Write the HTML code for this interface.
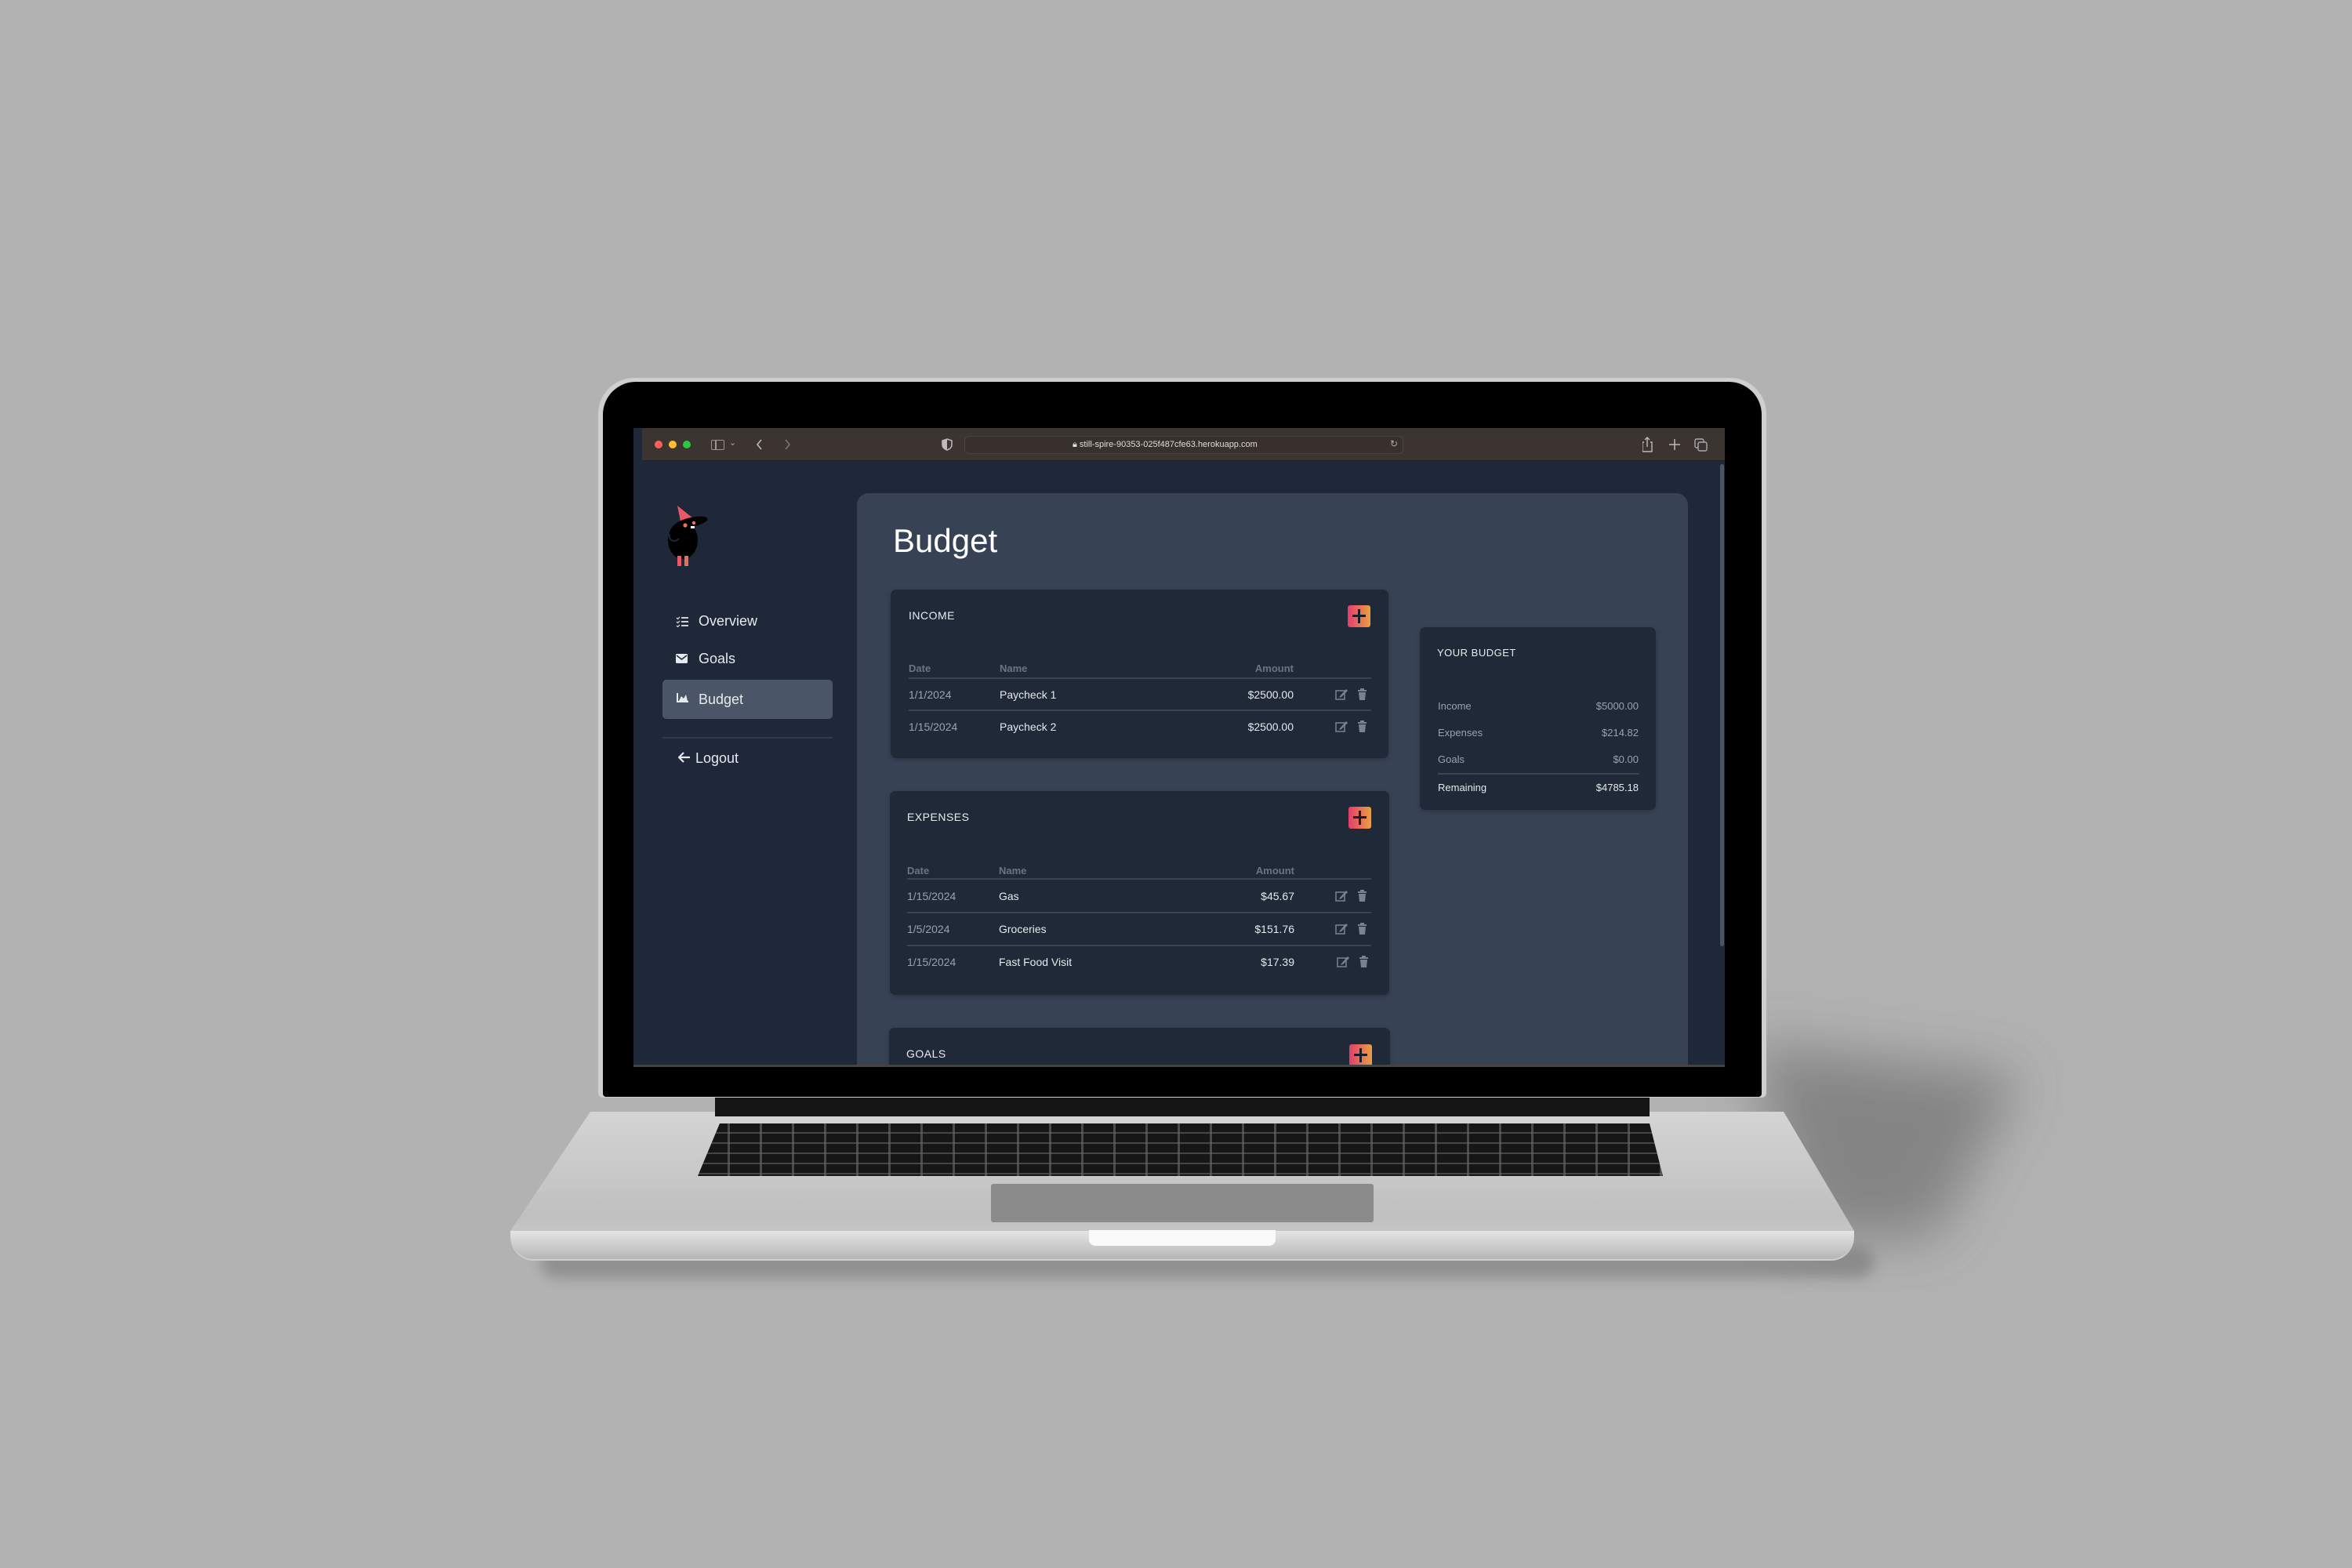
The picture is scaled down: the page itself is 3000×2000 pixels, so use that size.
<!DOCTYPE html>
<html><head><meta charset="utf-8"><style>
*{margin:0;padding:0;box-sizing:border-box}
body{width:3000px;height:2000px;background:#b2b2b2;position:relative;overflow:hidden;font-family:"Liberation Sans",sans-serif}
.a{position:absolute}
.t{position:absolute;white-space:nowrap}
.card{position:absolute;background:#1f2938;border-radius:7px;box-shadow:0 2px 6px rgba(0,0,0,.25)}
.lbl{color:#e8ecf0;font-size:14px;letter-spacing:.5px}
.hd{color:#6b7482;font-size:13px;font-weight:bold}
.cell{color:#e6e9ed;font-size:14px}
.dt{color:#9aa2ad;font-size:14px}
.line{position:absolute;height:2px;background:#3a4453}
.plus{position:absolute;width:29px;height:28px;border-radius:3px;background:linear-gradient(90deg,#e33d6c,#e9a043)}
.plus:before{content:"";position:absolute;left:13px;top:5px;width:3px;height:18px;background:#1b1f27}
.plus:after{content:"";position:absolute;left:6px;top:12px;width:17px;height:3px;background:#1b1f27}
</style></head><body>
<!-- shadow -->
<svg class="a" style="left:0;top:0" width="3000" height="2000">
 <defs><filter id="b" x="-50%" y="-50%" width="200%" height="200%"><feGaussianBlur stdDeviation="35"/></filter></defs>
 <polygon points="2230,1330 2580,1370 2470,1580 2300,1580" fill="rgba(95,95,95,.55)" filter="url(#b)"/>
</svg>
<div class="a" style="left:690px;top:1590px;width:1700px;height:40px;background:rgba(110,110,110,.5);filter:blur(8px);border-radius:20px"></div>
<!-- base -->
<div class="a" style="left:651px;top:1418px;width:1714px;height:190px;background:linear-gradient(#d4d4d4,#c0c0c0 70%,#cfcfcf);clip-path:polygon(102px 0,1624px 0,1714px 152px,1714px 190px,0 190px,0 152px);border-radius:0 0 30px 30px"></div>
<div class="a" style="left:651px;top:1570px;width:1714px;height:36px;background:linear-gradient(#e4e4e4,#c9c9c9 60%,#b5b5b5);border-radius:0 0 30px 30px"></div>
<div class="a" style="left:912px;top:1397px;width:1192px;height:27px;background:#141414"></div>
<div class="a" style="left:890px;top:1433px;width:1231px;height:67px;background:repeating-linear-gradient(90deg,#161616 0 38px,#4a4a4a 38px 41px);clip-path:polygon(28px 0,1214px 0,1231px 67px,0 67px)"></div>
<div class="a" style="left:890px;top:1433px;width:1231px;height:67px;background:repeating-linear-gradient(180deg,transparent 0 11px,rgba(100,100,100,.6) 11px 13px);clip-path:polygon(28px 0,1214px 0,1231px 67px,0 67px)"></div>
<div class="a" style="left:1264px;top:1510px;width:488px;height:49px;background:#8b8b8b;border-radius:3px"></div>
<div class="a" style="left:1389px;top:1569px;width:238px;height:20px;background:#fafafa;border-radius:0 0 8px 8px"></div>
<!-- lid -->
<div class="a" style="left:763px;top:482px;width:1490px;height:918px;background:#cfcfcf;border-radius:46px 46px 6px 6px"></div>
<div class="a" style="left:769px;top:487px;width:1478px;height:912px;background:#000;border-radius:42px 42px 4px 4px"></div>
<!-- screen -->
<div class="a" style="left:808px;top:546px;width:1392px;height:813px;background:#1e2839;overflow:hidden">
 <div class="a" style="left:11px;top:0;width:1381px;height:42px;background:#3b3430;border-bottom:1px solid #222"></div>
 <div class="a" style="left:27px;top:16px;width:10px;height:10px;border-radius:50%;background:#fe5f57"></div>
 <div class="a" style="left:45px;top:16px;width:10px;height:10px;border-radius:50%;background:#febc2e"></div>
 <div class="a" style="left:63px;top:16px;width:10px;height:10px;border-radius:50%;background:#28c840"></div>
 <div class="a" style="left:99px;top:15px;width:17px;height:13px;border:1.5px solid #9a948f;border-radius:2px"></div>
 <div class="a" style="left:104px;top:16px;width:1.5px;height:11px;background:#9a948f"></div>
 <div class="t" style="left:122px;top:12px;color:#aaa;font-size:11px">⌄</div>
 <svg class="a" style="left:155px;top:13px" width="60" height="16"><path d="M8 2L3 8 8 14" stroke="#bbb" stroke-width="1.6" fill="none"/><path d="M39 2L44 8 39 14" stroke="#777" stroke-width="1.6" fill="none"/></svg>
 <svg class="a" style="left:393px;top:13px" width="14" height="16"><path d="M7 1L13 3V8C13 12 10 14 7 15 4 14 1 12 1 8V3Z" fill="none" stroke="#bbb" stroke-width="1.5"/><path d="M7 1V15C4 14 1 12 1 8V3Z" fill="#bbb"/></svg>
 <div class="a" style="left:422px;top:10px;width:560px;height:23px;border:1px solid #4a4440;border-radius:6px;background:#37302c"></div>
 <div class="t" style="left:560px;top:15px;color:#ddd;font-size:11px">🔒︎ still-spire-90353-025f487cfe63.herokuapp.com</div>
 <div class="t" style="left:965px;top:13px;color:#aaa;font-size:12px">↻</div>
 <svg class="a" style="left:1287px;top:10px" width="90" height="22"><path d="M2 8H0V20H12V8H10M6 14V2M3 5L6 2 9 5" stroke="#bbb" stroke-width="1.4" fill="none"/><path d="M41 4V18M34 11H48" stroke="#bbb" stroke-width="1.5"/><rect x="67" y="4" width="11" height="11" rx="2" fill="none" stroke="#aaa" stroke-width="1.4"/><rect x="71" y="8" width="11" height="11" rx="2" fill="#3b3430" stroke="#aaa" stroke-width="1.4"/></svg>
 <div class="a" style="left:1386px;top:46px;width:5px;height:615px;background:#4a5463;border-radius:3px"></div>
 <!-- logo -->
 <svg class="a" style="left:30px;top:95px" width="75" height="90" viewBox="0 0 75 90">
  <polygon points="26,4 46,20 30,24" fill="#e85866"/>
  <ellipse cx="33" cy="48" rx="19" ry="24" fill="#000"/>
  <ellipse cx="44" cy="25" rx="21" ry="6" fill="#000" transform="rotate(-12 44 25)"/>
  <path d="M16 40C14 48 22 52 28 46" stroke="#1e2839" stroke-width="2" fill="none"/>
  <circle cx="36" cy="29" r="2.6" fill="#f07060"/><circle cx="47" cy="26" r="2.2" fill="#f07060"/>
  <rect x="43" y="30" width="5" height="3" fill="#fff"/>
  <rect x="26" y="68" width="5" height="13" fill="#e85866"/><rect x="35" y="68" width="5" height="13" fill="#e87050"/>
 </svg>
 <!-- nav -->
 <svg class="a" style="left:54px;top:240px" width="16" height="14"><path d="M1 2L2.5 3.5 5 1M1 7L2.5 8.5 5 6M1 12L2.5 13.5 5 11" stroke="#e6e9ed" stroke-width="1.2" fill="none"/><path d="M7 2H16M7 7H16M7 12H16" stroke="#e6e9ed" stroke-width="1.8"/></svg>
 <div class="t" style="left:83px;top:236px;color:#e6e9ed;font-size:18px">Overview</div>
 <svg class="a" style="left:54px;top:288px" width="15" height="12"><rect width="15" height="12" rx="1.5" fill="#e6e9ed"/><path d="M1 2L7.5 7 14 2" stroke="#1e2839" stroke-width="1.5" fill="none"/></svg>
 <div class="t" style="left:83px;top:284px;color:#e6e9ed;font-size:18px">Goals</div>
 <div class="a" style="left:37px;top:321px;width:217px;height:50px;background:#4a5567;border-radius:5px"></div>
 <svg class="a" style="left:55px;top:338px" width="15" height="12"><path d="M1 0V11H15" stroke="#e6e9ed" stroke-width="2" fill="none"/><path d="M3 10L6 4 9 7 12 2 14 10Z" fill="#e6e9ed"/></svg>
 <div class="t" style="left:83px;top:336px;color:#e6e9ed;font-size:18px">Budget</div>
 <div class="a" style="left:37px;top:394px;width:217px;height:2px;background:#2f3a4a"></div>
 <svg class="a" style="left:57px;top:413px" width="16" height="14"><path d="M15 7H2M7 1L1 7 7 13" stroke="#e6e9ed" stroke-width="2.2" fill="none"/></svg>
 <div class="t" style="left:79px;top:411px;color:#e6e9ed;font-size:18px">Logout</div>
 <!-- main -->
 <div class="a" style="left:285px;top:83px;width:1060px;height:760px;background:#374355;border-radius:15px"></div>
 <div class="t" style="left:331px;top:120px;color:#fff;font-size:42px">Budget</div>
 <!-- income -->
 <div class="card" style="left:328px;top:206px;width:635px;height:215px"></div>
 <div class="t lbl" style="left:351px;top:231px">INCOME</div>
 <div class="plus" style="left:911px;top:226px"></div>
 <div class="t hd" style="left:351px;top:299px">Date</div>
 <div class="t hd" style="left:467px;top:299px">Name</div>
 <div class="t hd" style="left:780px;top:299px;width:62px;text-align:right">Amount</div>
 <div class="line" style="left:351px;top:318px;width:590px"></div>
 <div class="t dt" style="left:351px;top:332px">1/1/2024</div>
 <div class="t cell" style="left:467px;top:332px">Paycheck 1</div>
 <div class="t cell" style="left:742px;top:332px;width:100px;text-align:right">$2500.00</div>
 <div class="line" style="left:351px;top:359px;width:590px"></div>
 <div class="t dt" style="left:351px;top:373px">1/15/2024</div>
 <div class="t cell" style="left:467px;top:373px">Paycheck 2</div>
 <div class="t cell" style="left:742px;top:373px;width:100px;text-align:right">$2500.00</div>
 <!-- expenses -->
 <div class="card" style="left:327px;top:463px;width:637px;height:260px"></div>
 <div class="t lbl" style="left:349px;top:488px">EXPENSES</div>
 <div class="plus" style="left:912px;top:483px"></div>
 <div class="t hd" style="left:349px;top:557px">Date</div>
 <div class="t hd" style="left:466px;top:557px">Name</div>
 <div class="t hd" style="left:780px;top:557px;width:63px;text-align:right">Amount</div>
 <div class="line" style="left:349px;top:574px;width:592px"></div>
 <div class="t dt" style="left:349px;top:589px">1/15/2024</div>
 <div class="t cell" style="left:466px;top:589px">Gas</div>
 <div class="t cell" style="left:743px;top:589px;width:100px;text-align:right">$45.67</div>
 <div class="line" style="left:349px;top:617px;width:592px"></div>
 <div class="t dt" style="left:349px;top:631px">1/5/2024</div>
 <div class="t cell" style="left:466px;top:631px">Groceries</div>
 <div class="t cell" style="left:743px;top:631px;width:100px;text-align:right">$151.76</div>
 <div class="line" style="left:349px;top:659px;width:592px"></div>
 <div class="t dt" style="left:349px;top:673px">1/15/2024</div>
 <div class="t cell" style="left:466px;top:673px">Fast Food Visit</div>
 <div class="t cell" style="left:743px;top:673px;width:100px;text-align:right">$17.39</div>
 <!-- goals -->
 <div class="card" style="left:326px;top:765px;width:639px;height:100px"></div>
 <div class="t lbl" style="left:348px;top:790px">GOALS</div>
 <div class="plus" style="left:913px;top:786px"></div>
 <!-- your budget -->
 <div class="card" style="left:1003px;top:254px;width:301px;height:233px"></div>
 <div class="t lbl" style="left:1025px;top:279px;font-size:13px">YOUR BUDGET</div>
 <div class="t dt" style="left:1026px;top:347px;font-size:13px">Income</div>
 <div class="t dt" style="left:1180px;top:347px;width:102px;text-align:right;font-size:13px">$5000.00</div>
 <div class="t dt" style="left:1026px;top:381px;font-size:13px">Expenses</div>
 <div class="t dt" style="left:1180px;top:381px;width:102px;text-align:right;font-size:13px">$214.82</div>
 <div class="t dt" style="left:1026px;top:415px;font-size:13px">Goals</div>
 <div class="t dt" style="left:1180px;top:415px;width:102px;text-align:right;font-size:13px">$0.00</div>
 <div class="line" style="left:1026px;top:440px;width:257px"></div>
 <div class="t cell" style="left:1026px;top:451px;font-size:13px">Remaining</div>
 <div class="t cell" style="left:1180px;top:451px;width:102px;text-align:right;font-size:13px">$4785.18</div>
 <!-- icons -->
 <svg class="a" style="left:0;top:0" width="1392" height="813">
  <g fill="#7a8290">
   <g id="r"><rect x="896" y="335" width="11" height="11" fill="none" stroke="#7a8290" stroke-width="1.5"/><path d="M901 342L909 333 911 335 903 343 900 344Z"/><rect x="924" y="334" width="11" height="2"/><rect x="927" y="332" width="5" height="2"/><path d="M925 337H934L933 347H926Z"/></g>
   <use href="#r" y="41"/><use href="#r" y="257"/><use href="#r" y="299"/><use href="#r" y="341" x="2"/>
  </g>
 </svg>
</div>
<div class="a" style="left:808px;top:1358px;width:1392px;height:3px;background:#444"></div>
</body></html>
